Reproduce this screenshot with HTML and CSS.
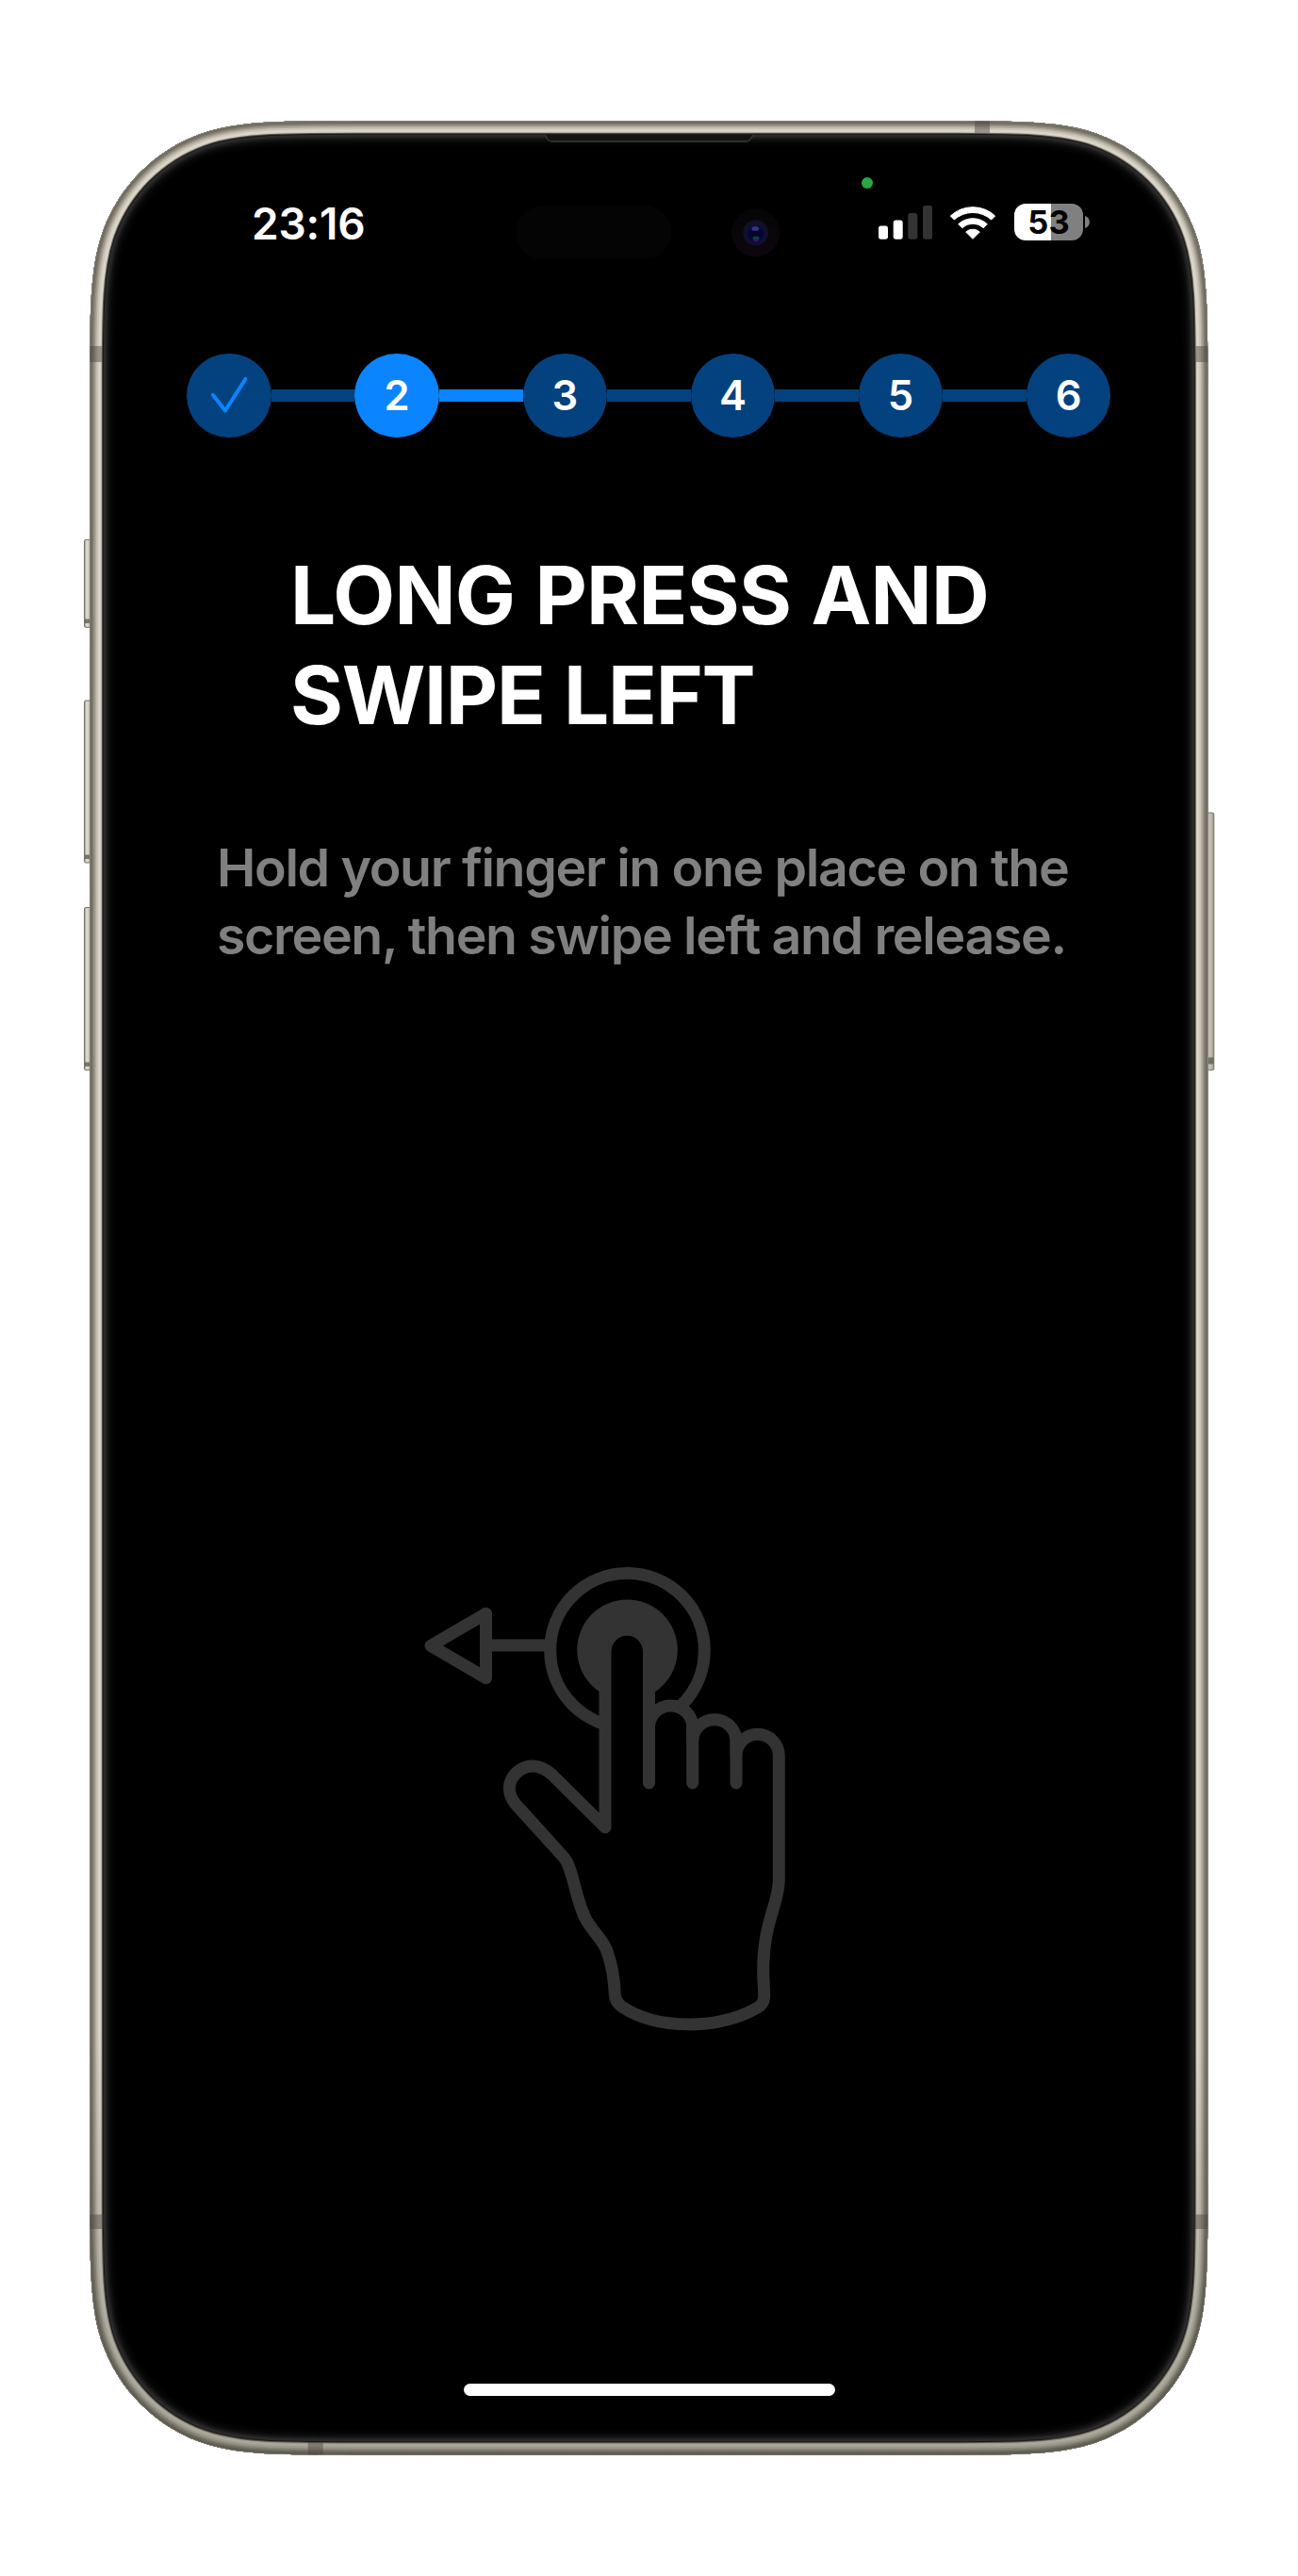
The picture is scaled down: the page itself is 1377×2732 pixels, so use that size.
FILE: index.html
```html
<!DOCTYPE html>
<html lang="en">
<head>
<meta charset="utf-8">
<title>Gesture tutorial</title>
<link rel="stylesheet" href="styles.css">
</head>
<body>
<main class="stage">
  <svg class="frame" viewBox="0 0 1377 2732" aria-hidden="true">
    <defs>
      <path id="body" d="M378.1 128.3 H998.5 C1080 128.3 1126.4 128.3 1164.5 142.2 C1212.3 159.6 1250 197.3 1267.4 245.1 C1281.3 283.2 1281.3 329.7 1281.3 411.1 V2320.9 C1281.3 2402.3 1281.3 2448.8 1267.4 2486.9 C1250 2534.7 1212.3 2572.4 1164.5 2589.8 C1126.4 2603.7 1080 2603.7 998.5 2603.7 H378.1 C296.7 2603.7 250.2 2603.7 212.1 2589.8 C164.3 2572.4 126.6 2534.7 109.2 2486.9 C95.3 2448.8 95.3 2402.3 95.3 2320.9 V411.1 C95.3 329.7 95.3 283.2 109.2 245.1 C126.6 197.3 164.3 159.6 212.1 142.2 C250.2 128.3 296.7 128.3 378.1 128.3 Z"/>
      <clipPath id="inside"><use href="#body"/></clipPath>
      <linearGradient id="keyL"><stop offset="0" stop-color="#8f8a7d"/><stop offset=".3" stop-color="#e4e0d5"/><stop offset=".75" stop-color="#bdb8aa"/><stop offset="1" stop-color="#77736a"/></linearGradient>
      <linearGradient id="keyR"><stop offset="0" stop-color="#77736a"/><stop offset=".3" stop-color="#c9c4b7"/><stop offset=".75" stop-color="#b8b3a6"/><stop offset="1" stop-color="#8f8a7d"/></linearGradient>
      <linearGradient id="shade" gradientUnits="userSpaceOnUse" x1="0" y1="128" x2="0" y2="2604"><stop offset=".82" stop-color="#38352c" stop-opacity="0"/><stop offset=".94" stop-color="#38352c" stop-opacity=".25"/><stop offset="1" stop-color="#38352c" stop-opacity=".3"/></linearGradient>
      <radialGradient id="lens" cy=".55"><stop offset="0" stop-color="#05051c"/><stop offset=".55" stop-color="#060638"/><stop offset=".75" stop-color="#101035"/><stop offset="1" stop-color="#101020"/></radialGradient>
      <linearGradient id="ring" x1="0" y1="0" x2="0" y2="1"><stop offset="0" stop-color="#050505"/><stop offset="1" stop-color="#0e060e"/></linearGradient>
    </defs>
    <g class="keys">
      <rect x="89.500" y="572.300" width="8" height="93" rx="1.500" fill="url(#keyL)"/>
      <rect x="89.500" y="743" width="8" height="172" rx="1.500" fill="url(#keyL)"/>
      <rect x="89.500" y="962.500" width="8" height="172.500" rx="1.500" fill="url(#keyL)"/>
      <rect x="1280" y="862" width="7.800" height="273" rx="1.500" fill="url(#keyR)"/>
      <path class="key-end" d="M90 656.500h6v4.500h-6zM90 906.500h6v4.500h-6zM90 1126.500h6v4.500h-6zM1281 1121.500h6.500v7h-6.500z"/>
    </g>
    <g clip-path="url(#inside)">
      <use href="#body" class="glass"/>
      <use href="#body" class="band b1"/>
      <use href="#body" class="band b2"/>
      <use href="#body" class="band b3"/>
      <use href="#body" class="band b4"/>
      <use href="#body" class="band b5"/>
      <use href="#body" class="band b6"/>
      <use href="#body" class="band b7"/>
      <use href="#body" class="band b8"/>
      <use href="#body" class="band b9"/>
      <use href="#body" class="band b10"/>
      <use href="#body" class="band b11"/>
      <use href="#body" class="band b12"/>
      <use href="#body" class="band b13"/>
      <use href="#body" class="band b14"/>
      <use href="#body" class="band b15"/>
      <use href="#body" class="band b16"/>
      <use href="#body" class="band shade" stroke="url(#shade)"/>
      <path class="antenna" d="M95 367h13.500v17h-13.500zM1268.500 367h13.500v17h-13.500zM1034 128h16v13h-16zM95 2348.500h14.500v15.500h-14.500zM1268 2348.500h14v15.500h-14zM326.700 2590h16v14h-16z"/>
    </g>
    <path class="speaker" d="M578 143 L581.500 148.500 Q582.500 150 585 150 H792 Q794.500 150 795.500 148.500 L799 143"/>
    <rect x="547.500" y="218.300" width="165" height="56.300" rx="28" fill="#040404"/>
    <circle cx="801.700" cy="246.700" r="25.500" fill="url(#ring)"/>
    <circle cx="801.700" cy="246.700" r="13.500" fill="url(#lens)"/>
    <ellipse cx="801.300" cy="242.500" rx="4" ry="2.500" fill="#34347a"/>
    <ellipse cx="802" cy="252.500" rx="3.500" ry="2" fill="#0b4048"/>
    <ellipse cx="802" cy="255" rx="3" ry="1.200" fill="#451050"/>
  </svg>

  <section class="screen">
    <header class="status">
      <time class="clock">23:16</time>
      <div class="indicators">
        <svg class="signal" viewBox="0 0 57 36"><rect x="0" y="21.500" width="10" height="14.200" rx="2.700"/><rect x="15.700" y="15.500" width="10" height="20.200" rx="2.700"/><rect class="off" x="31.300" y="8" width="10" height="27.700" rx="2.700"/><rect class="off" x="47" y="0" width="10" height="35.700" rx="2.700"/></svg>
        <svg class="wifi" viewBox="320 320 150 113"><path d="M324 356 A104 104 0 0 1 466 356 L454 368 A88 88 0 0 0 336 368 Z"/><path d="M349 382 A68 68 0 0 1 441 382 L429 394 A50 50 0 0 0 361 394 Z"/><path d="M373 407 A33 33 0 0 1 417 407 L395 429 Z"/></svg>
        <div class="battery"><span class="charge">53</span><svg class="tip" viewBox="0 0 5 13"><path d="M0 0C6.500 2 6.500 11 0 13Z"/></svg></div>
      </div>
      <i class="camera-dot"></i>
    </header>

    <ol class="steps">
      <li class="step"><svg class="check" viewBox="0 0 38 38"><path d="M1.800 18.800 L15 35.500 L36.500 2"/></svg></li>
      <li class="link"></li>
      <li class="step active">2</li>
      <li class="link active"></li>
      <li class="step">3</li>
      <li class="link"></li>
      <li class="step">4</li>
      <li class="link"></li>
      <li class="step">5</li>
      <li class="link"></li>
      <li class="step">6</li>
    </ol>

    <h1 class="title">LONG PRESS AND<br><span class="title-end">SWIPE LEFT</span></h1>
    <p class="hint">Hold your finger in one place on the<br>screen, then swipe left and release.</p>

    <svg class="gesture" viewBox="0 0 420 540">
      <circle cx="225.500" cy="110.300" r="81.800"/>
      <circle class="solid" cx="225.500" cy="109.800" r="53.300"/>
      <path d="M75.500 105.100H143M75.500 71.200V139.600L17 105.400Z"/>
      <path class="hand" d="M202 298 V111.600 A23.250 23.250 0 0 1 248.500 111.600 V192 A23.100 23.100 0 0 1 294.700 192 V206.800 A23.150 23.150 0 0 1 341 206.800 V222 A22.650 22.650 0 0 1 386.300 222 V354 C386.300 379 369.700 398 369.700 450 C369.700 462 370.700 468 370.700 478 Q370 485.500 364 489 C323 513 256 513 219.500 488 Q212.500 482.500 212.300 475 C211.500 455 209 443 203.500 428 C198 415 187 407 180.500 393.500 C170 370 169 350 161.500 335 C160.500 332.500 159 330.800 156.500 328 L107 273.300 C91 254 107 233 125.300 233 C134 233 140 237 146 242.500 Z"/>
      <path d="M248.500 180V251M294.700 192V251M341 206.800V251"/>
    </svg>

    <div class="home"></div>
  </section>
</main>
</body>
</html>
```

FILE: styles.css
```css
* { box-sizing: border-box; }
body { margin: 0; background: #fff; font-family: Inter, "Liberation Sans", sans-serif; }
.stage { position: relative; width: 1377px; height: 2732px; overflow: hidden; }
.frame { position: absolute; inset: 0; width: 1377px; height: 2732px; }

.glass { fill: #000; }
.band { fill: none; }
.b1 { stroke: #030303; stroke-width: 54px; }
.b2 { stroke: #070707; stroke-width: 48px; }
.b3 { stroke: #0e0e0e; stroke-width: 43px; }
.b4 { stroke: #181818; stroke-width: 39px; }
.b5 { stroke: #222; stroke-width: 36px; }
.b6 { stroke: #2b2b2b; stroke-width: 33px; }
.b7 { stroke: #191817; stroke-width: 29px; }
.b8 { stroke: #625d52; stroke-width: 27px; }
.b9 { stroke: #cdc8ba; stroke-width: 25px; }
.b10 { stroke: #dad5c8; stroke-width: 23px; }
.b11 { stroke: #c8c3b5; stroke-width: 18px; }
.b12 { stroke: #b0ab9d; stroke-width: 14px; }
.b13 { stroke: #989385; stroke-width: 11px; }
.b14 { stroke: #827d70; stroke-width: 8px; }
.b15 { stroke: #716c61; stroke-width: 5px; }
.b16 { stroke: #8f8b82; stroke-width: 1px; }
.shade { stroke-width: 26px; }
.antenna { fill: #4b4242; opacity: .45; }
.keys rect { stroke: #77736a; stroke-width: 1px; }
.key-end { fill: #625d52; opacity: .8; }
.speaker { fill: #141414; stroke: #3a3a3a; stroke-width: 1.300px; }

.screen {
  position: relative;
  display: flex; flex-direction: column;
  width: 1158px; height: 2447px;
  margin: 142px 0 0 109px;
  color: #fff;
}
.status { position: relative; display: flex; justify-content: space-between; height: 233px; padding: 74px 111px 0 158px; }
.clock { font-size: 46px; line-height: 42px; font-weight: 600; letter-spacing: -.2px; }
.indicators { display: flex; align-items: flex-start; }
.signal { width: 57px; height: 36px; margin-top: 2px; fill: #fff; }
.signal .off { fill: #333; }
.wifi { width: 50px; height: 37.700px; margin: 1px 0 0 18.500px; fill: #fff; stroke: #fff; stroke-width: 3px; stroke-linejoin: round; }
.battery { display: flex; align-items: center; gap: 2px; margin-left: 19px; }
.charge {
  width: 73px; height: 39px; border-radius: 12px;
  background: linear-gradient(90deg, #fff 39px, #808080 39px);
  color: #000; font-size: 34.500px; line-height: 39px; font-weight: 700; text-align: center;
}
.tip { width: 5px; height: 13px; fill: #808080; }
.camera-dot { position: absolute; left: 805px; top: 46px; width: 12px; height: 12px; border-radius: 50%; background: #28a745; }

.steps { display: flex; align-items: center; width: 980px; margin: 0 0 0 89.300px; padding: 0; list-style: none; }
.step {
  display: flex; align-items: center; justify-content: center;
  width: 89.300px; height: 89.300px; padding-bottom: 1px; border-radius: 50%;
  background: #04427f; font-size: 43.500px; font-weight: 600;
}
.link { flex: 1; height: 12.700px; background: #04427f; }
.active { background: #0a84ff; }
.check { width: 38px; height: 38px; fill: none; stroke: #0a84ff; stroke-width: 4px; stroke-linecap: round; stroke-linejoin: round; }

.title { margin: 114px 0 0 199px; font-size: 85.500px; line-height: 106px; font-weight: 700; letter-spacing: -.7px; word-spacing: 1.500px; white-space: nowrap; }
.title-end { letter-spacing: -1.300px; }
.hint { margin: 94px 0 0 121px; color: #808080; font-size: 55.500px; line-height: 72px; font-weight: 600; letter-spacing: -1.380px; white-space: nowrap; }

.gesture { width: 420px; height: 540px; margin: 611.700px 0 0 331px; fill: none; stroke: #333; stroke-width: 13px; stroke-linecap: round; stroke-linejoin: round; }
.gesture .solid { fill: #333; stroke: none; }
.gesture .hand { fill: #000; }

.home { width: 394.500px; height: 12.700px; margin: auto auto 48.500px 382.500px; border-radius: 7px; background: #fff; }
```
